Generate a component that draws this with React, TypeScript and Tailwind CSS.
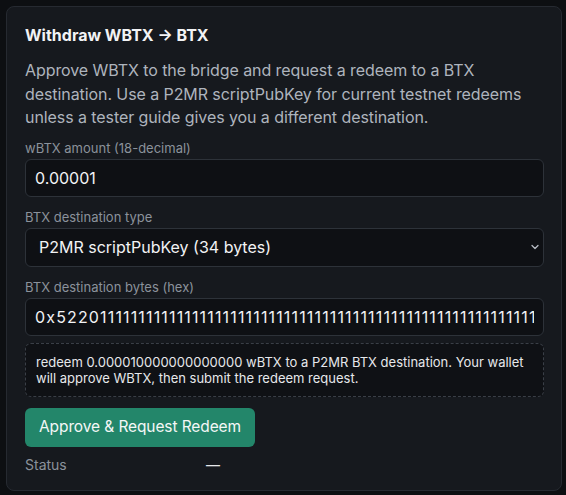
import { ChevronDown } from "lucide-react";

const HEX_VALUE = "0x5220" + "1".repeat(64);

function Field({ label, children }: { label: string; children: React.ReactNode }) {
  return (
    <label className="flex flex-col gap-[3px]">
      <span className="text-[13px] leading-[16px] text-[#8b929b]">{label}</span>
      {children}
    </label>
  );
}

export default function App() {
  return (
    <div
      className="min-h-[495px] bg-[#0d0f12] py-[6px] pl-[6px] pr-[4px]"
      style={{ fontFamily: "Inter, 'Noto Sans', sans-serif" }}
    >
      <section className="rounded-lg border border-[#262a31] bg-[#16191e] pb-[15px] pl-[18px] pr-[17px] pt-[16px]">
        <h2 className="text-[16px] font-bold leading-[24px] text-[#f2f3f5]">Withdraw WBTX → BTX</h2>
        <p className="mt-[12px] text-[16px] leading-[23.5px] tracking-[-0.08px] text-[#aeb4bd]">
          Approve WBTX to the bridge and request a redeem to a BTX destination. Use a P2MR scriptPubKey for current
          testnet redeems unless a tester guide gives you a different destination.
        </p>

        <div className="mt-[10px] flex flex-col gap-[12px]">
          <Field label="wBTX amount (18-decimal)">
            <input
              readOnly
              value="0.00001"
              className="h-[38px] w-full rounded-md border border-[#2d3239] bg-[#0e1014] px-[9px] text-[16px] text-[#f2f3f5] outline-none"
            />
          </Field>

          <Field label="BTX destination type">
            <div className="relative">
              <select
                defaultValue="p2mr"
                className="h-[39px] w-full appearance-none rounded-md border border-[#2d3239] bg-[#0e1014] pl-[13px] pr-8 text-[16px] text-[#f2f3f5] outline-none"
              >
                <option value="p2mr">P2MR scriptPubKey (34 bytes)</option>
              </select>
              <ChevronDown
                className="pointer-events-none absolute right-[3px] top-1/2 -translate-y-1/2 text-[#b7bcc4]"
                size={12}
                strokeWidth={2.5}
              />
            </div>
          </Field>

          <Field label="BTX destination bytes (hex)">
            <input
              readOnly
              value={HEX_VALUE}
              className="h-[38px] w-full rounded-md border border-[#2d3239] bg-[#0e1014] px-[9px] text-[16px] tracking-[1.15px] text-[#f2f3f5] outline-none"
            />
          </Field>
        </div>

        <div className="mt-[7px] rounded-md border border-dashed border-[#3a3f47] bg-[#0f1115] px-[10px] py-[10px] text-[13px] leading-[16px] text-[#e6e8eb]">
          redeem 0.000010000000000000 wBTX to a P2MR BTX destination. Your wallet will approve WBTX, then submit the
          redeem request.
        </div>

        <button className="mt-[11px] h-[39px] rounded-md bg-[#23866a] px-[14px] text-[15.5px] tracking-[-0.1px] text-[#f4f7f6]">
          Approve &amp; Request Redeem
        </button>

        <dl className="mt-[8px] grid grid-cols-[181px_1fr] text-[14px] leading-[20px]">
          <dt className="text-[#8b929b]">Status</dt>
          <dd className="text-[#e6e8eb]">—</dd>
        </dl>
      </section>
    </div>
  );
}
